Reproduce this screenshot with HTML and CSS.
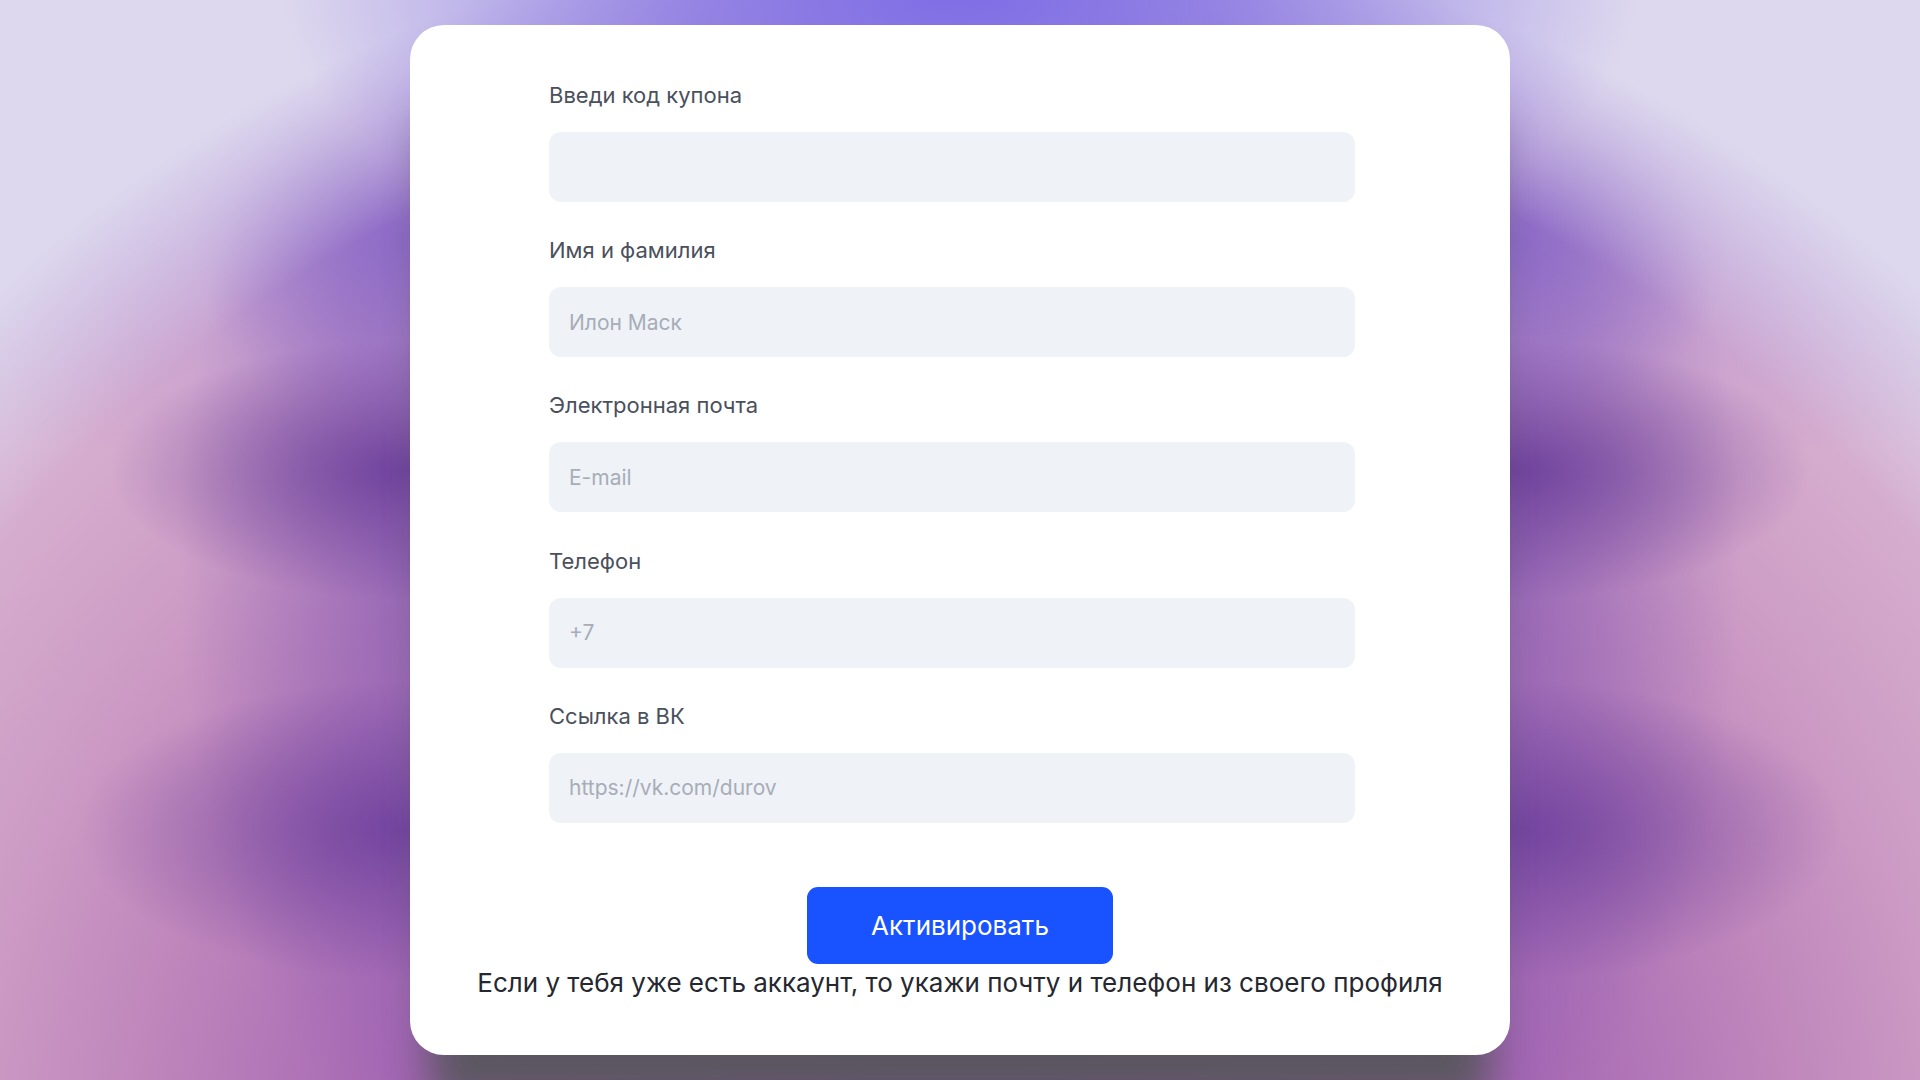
FILE: index.html
```html
<!DOCTYPE html>
<html lang="ru">
<head>
<meta charset="utf-8">
<title>Активация купона</title>
<link rel="stylesheet" href="styles.css">
</head>
<body>
<div class="page">
  <main class="card">
    <form class="form">
      <div class="field">
        <label class="label" for="coupon">Введи код купона</label>
        <input class="input" id="coupon" type="text">
      </div>
      <div class="field">
        <label class="label" for="name">Имя и фамилия</label>
        <input class="input" id="name" type="text" placeholder="Илон Маск">
      </div>
      <div class="field">
        <label class="label" for="email">Электронная почта</label>
        <input class="input" id="email" type="text" placeholder="E-mail">
      </div>
      <div class="field">
        <label class="label" for="phone">Телефон</label>
        <input class="input" id="phone" type="text" placeholder="+7">
      </div>
      <div class="field">
        <label class="label" for="vk">Ссылка в ВК</label>
        <input class="input" id="vk" type="text" placeholder="https://vk.com/durov">
      </div>
    </form>
    <div class="actions">
      <button class="button" type="button">Активировать</button>
      <p class="note">Если у тебя уже есть аккаунт, то укажи почту и телефон из своего профиля</p>
    </div>
  </main>
</div>
</body>
</html>
```
FILE: styles.css
```css
* { box-sizing: border-box; }

html, body {
  margin: 0;
  height: 100%;
}

body {
  overflow: hidden;
  font-family: "Inter", "Noto Sans", sans-serif;
  background-color: #ddd8ee;
  background-image:
    radial-gradient(ellipse 680px 330px at 960px -20px, rgba(124, 108, 230, 1) 0%, rgba(132, 114, 226, 0.75) 40%, rgba(160, 140, 225, 0) 100%),
    radial-gradient(ellipse 1400px 1300px at 960px 1180px, rgba(221, 216, 238, 0) 84%, rgba(221, 216, 238, 1) 97%),
    radial-gradient(ellipse 220px 190px at 410px 240px, rgba(118, 86, 198, 0.6), rgba(118, 86, 198, 0)),
    radial-gradient(ellipse 220px 190px at 1510px 240px, rgba(118, 86, 198, 0.6), rgba(118, 86, 198, 0)),
    radial-gradient(ellipse 300px 130px at 410px 470px, rgba(98, 54, 150, 0.8), rgba(98, 54, 150, 0)),
    radial-gradient(ellipse 300px 130px at 1510px 470px, rgba(98, 54, 150, 0.8), rgba(98, 54, 150, 0)),
    radial-gradient(ellipse 330px 150px at 410px 830px, rgba(100, 56, 152, 0.75), rgba(100, 56, 152, 0)),
    radial-gradient(ellipse 330px 150px at 1510px 830px, rgba(100, 56, 152, 0.75), rgba(100, 56, 152, 0)),
    radial-gradient(ellipse 230px 560px at 410px 560px, rgba(108, 68, 175, 0.5), rgba(108, 68, 175, 0)),
    radial-gradient(ellipse 230px 560px at 1510px 560px, rgba(108, 68, 175, 0.5), rgba(108, 68, 175, 0)),
    linear-gradient(to bottom, rgba(128, 100, 215, 0.55) 0px, rgba(128, 100, 215, 0) 450px),
    radial-gradient(ellipse 1400px 1250px at 960px 1180px, #8e4fae 0%, #a466b3 40%, #c088bc 60%, #cd9cc5 72%, #d5acce 85%, #d9bcd9 100%);
}

.page {
  padding-top: 25px;
}

.card {
  width: 1100px;
  margin: 0 auto;
  background: #ffffff;
  border-radius: 34px;
  padding: 57px 0 57px;
  box-shadow: 0 70px 40px -20px rgba(88, 86, 94, 0.96);
  display: flex;
  flex-direction: column;
}

.form {
  width: 806px;
  margin-left: 139px;
  display: flex;
  flex-direction: column;
  gap: 35.2px;
}

.field {
  display: flex;
  flex-direction: column;
  gap: 24px;
}

.label {
  font-size: 22px;
  line-height: 26px;
  color: #4a505c;
}

.input {
  height: 70px;
  width: 100%;
  border: none;
  outline: none;
  border-radius: 12px;
  background: #eff2f7;
  padding: 0 20px;
  font-family: inherit;
  font-size: 21px;
  color: #1f2937;
}

.input::placeholder {
  color: #a7adb7;
}

.actions {
  margin-top: 64px;
  display: flex;
  flex-direction: column;
  align-items: center;
}

.button {
  width: 306px;
  height: 77px;
  border: none;
  border-radius: 11px;
  background: #1952ff;
  color: #ffffff;
  font-family: inherit;
  font-size: 26px;
  font-weight: 400;
  cursor: pointer;
}

.note {
  margin: 3px 0 0;
  font-size: 26px;
  line-height: 31px;
  color: #25282f;
  text-align: center;
}
```
